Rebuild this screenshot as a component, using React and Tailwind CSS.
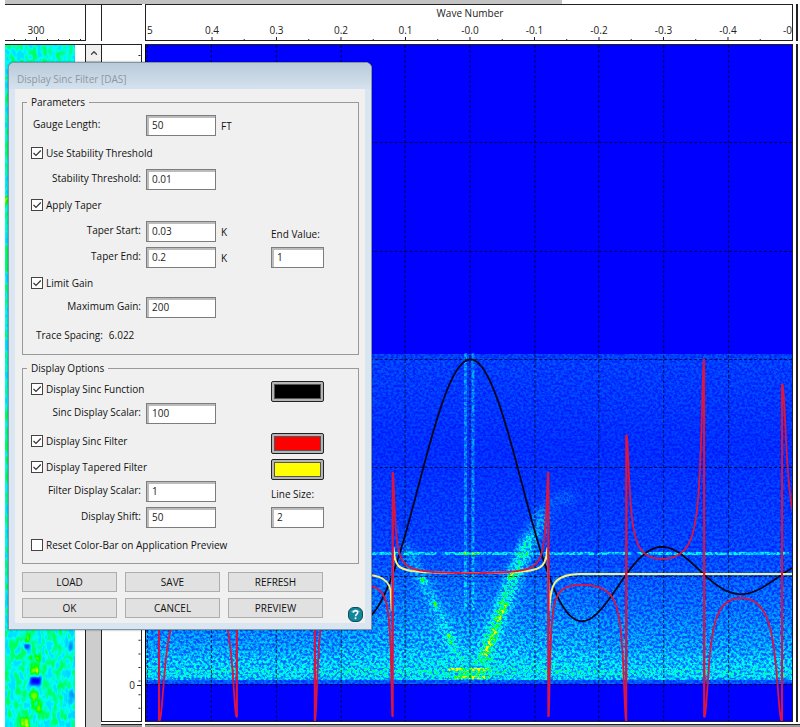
import clsx from 'clsx'
import { ChevronUp } from 'lucide-react'

const CENTER = 470
const LOBE = 78
const UNIT = 647

const POLES = [
  { x: 159, top: 384, bottom: 721 },
  { x: 237, top: 359, bottom: 717 },
  { x: 315, top: 435, bottom: 721 },
  { x: 393, top: 472, bottom: 717 },
  { x: 549, top: 472, bottom: 717 },
  { x: 627, top: 435, bottom: 721 },
  { x: 705, top: 359, bottom: 717 },
  { x: 783, top: 384, bottom: 721 },
]

const sinc = (x) => {
  const t = (Math.PI * (x - CENTER - 1)) / LOBE
  return t === 0 ? 1 : Math.sin(t) / t
}

const toPath = (points) =>
  points.map(([x, y], i) => `${i ? 'L' : 'M'}${x.toFixed(1)} ${y.toFixed(1)}`).join('')

function sincPath() {
  const points = []
  for (let x = 145; x <= 794; x += 2) points.push([x, 574.5 - 215 * sinc(x)])
  return toPath(points)
}

// 1 / sinc, eased off towards the limit of the nearest pole
function filterPath() {
  const points = []
  for (let x = 145.25; x <= 794; x += 0.5) {
    const pole = POLES.reduce((a, b) => (Math.abs(b.x - x) < Math.abs(a.x - x) ? b : a))
    const gain = 2.1 / sinc(x)
    const limit = gain > 0 ? 575.2 - pole.top : pole.bottom - 575.2
    const eased = gain / (1 + Math.abs(gain / limit) ** 2.5) ** 0.4
    points.push([x, 575.2 - eased])
  }
  return toPath(points)
}

const SINC_PATH = sincPath()
const FILTER_PATH = filterPath()
const TAPER_PATH =
  'M145 574H350C378 574 388 577 391 590L392 610L394 548C395 566 399 569 412 571C432 573 450 573 470 573C490 573 508 573 528 571C542 569 547 566 548 548L550 610C551 584 554 575 580 574H794'

// grey levels in, blue > cyan > green > yellow out
function HeatFilter({ id, frequency, seed, k1, k2 }) {
  return (
    <filter id={id} x="0" y="0" width="100%" height="100%" colorInterpolationFilters="sRGB">
      <feTurbulence type="fractalNoise" baseFrequency={frequency} numOctaves="2" seed={seed} />
      <feColorMatrix values="3.4 0 0 0 -1.2  3.4 0 0 0 -1.2  3.4 0 0 0 -1.2  0 0 0 0 1" result="noise" />
      <feComposite in="SourceGraphic" in2="noise" operator="arithmetic" k1={k1} k2={k2} k3="0" k4="0" />
      <feComponentTransfer>
        <feFuncR type="table" tableValues="0 0 0 0 1" />
        <feFuncG type="table" tableValues="0 0.5 1 1 1" />
        <feFuncB type="table" tableValues="1 1 1 0 0" />
        <feFuncA type="linear" slope="0" intercept="1" />
      </feComponentTransfer>
    </filter>
  )
}

function SpectrumPlot() {
  return (
    <svg className="block h-full w-full" viewBox="145 45 648 676" preserveAspectRatio="none">
      <defs>
        <HeatFilter id="spectrum" frequency="0.37 0.41" seed="7" k1="0.7" k2="0.45" />
        <filter id="soft" x="-50%" y="-50%" width="200%" height="200%">
          <feGaussianBlur stdDeviation="4" />
        </filter>
        <filter id="slight" x="-50%" y="-50%" width="200%" height="200%">
          <feGaussianBlur stdDeviation="1" />
        </filter>
        <linearGradient id="level" x1="0" y1="0" x2="0" y2="1">
          <stop offset="0" stopColor="#262626" />
          <stop offset="0.3" stopColor="#1b1b1b" />
          <stop offset="0.6" stopColor="#292929" />
          <stop offset="0.78" stopColor="#424242" />
          <stop offset="0.9" stopColor="#5c5c5c" />
          <stop offset="0.97" stopColor="#7e7e7e" />
          <stop offset="1" stopColor="#707070" />
        </linearGradient>
        <radialGradient id="fan" cx="0.5" cy="1" r="0.8">
          <stop offset="0" stopColor="#fff" stopOpacity="0.12" />
          <stop offset="1" stopColor="#fff" stopOpacity="0" />
        </radialGradient>
      </defs>

      <g filter="url(#spectrum)">
        <rect x="145" y="45" width="648" height="676" fill="#000" />
        <rect x="145" y="354" width="648" height="326" fill="url(#level)" />
        <rect x="145" y="680" width="648" height="4" fill="#333" />
        <rect x="340" y="500" width="260" height="180" fill="url(#fan)" />
        <g stroke="#fff" fill="none">
          <path d="M466 353V610M473.500 353V610" strokeWidth="3" strokeOpacity="0.2" />
          <path d="M145 553.500H793" strokeWidth="3" strokeOpacity="0.36" strokeDasharray="60 3 34 6 90 2" />
          <path d="M460 553.500H480" strokeWidth="3" strokeOpacity="0.6" />
          <g filter="url(#soft)">
            <path d="M480 668L506 600L546 510" strokeWidth="14" strokeOpacity="0.25" />
            <path d="M484 660L514 575L530 535" strokeWidth="9" strokeOpacity="0.5" />
            <path d="M462 664L432 598L405 545" strokeWidth="9" strokeOpacity="0.25" />
            <path d="M545 505L575 495" strokeWidth="10" strokeOpacity="0.1" />
          </g>
          <g filter="url(#slight)">
            <path d="M484 658L497 627M498 622L506 601M510 578L516 574" strokeWidth="6" strokeOpacity="0.75" />
            <path d="M433 601L438 608M448 632L453 646M421 577L426 584" strokeWidth="5" strokeOpacity="0.55" />
          </g>
          <path d="M448 669.500H492M455 677.500H490" strokeWidth="3" strokeOpacity="0.9" />
          <path d="M460 673.500H484" strokeWidth="4" strokeOpacity="0.5" />
          <path d="M145 673.500H793" strokeWidth="7" strokeOpacity="0.08" />
        </g>
      </g>

      <g stroke="#000" strokeOpacity="0.7" strokeDasharray="3 2">
        {[-4, -3, -2, -1, 0, 1, 2, 3, 4, 5].map((n) => (
          <path key={n} d={`M${Math.round(CENTER - n * 64.7) + 0.5} 45V721`} />
        ))}
        {[142, 251, 359, 467, 576, 684].map((y) => (
          <path key={y} d={`M145 ${y + 0.5}H793`} />
        ))}
      </g>

      <g fill="none" strokeLinejoin="round">
        <path d={SINC_PATH} stroke="#05051e" strokeWidth="1.8" />
        <path d={TAPER_PATH} stroke="#f6f27a" strokeWidth="2" />
        {POLES.map((p) => (
          <path key={p.x} d={`M${p.x} ${p.top}V${p.bottom}`} stroke="#c81450" strokeWidth="2" />
        ))}
        <path d={FILTER_PATH} stroke="#dc1440" strokeWidth="1.8" />
      </g>
      <path d="M145.500 45V721" stroke="#000" />
    </svg>
  )
}

function TraceImage() {
  return (
    <svg className="block h-full w-[70px]" viewBox="5 45 70 682" preserveAspectRatio="none">
      <defs>
        <HeatFilter id="trace" frequency="0.19 0.1" seed="3" k1="0.36" k2="0.76" />
        <filter id="spot" x="-50%" y="-50%" width="200%" height="200%">
          <feGaussianBlur stdDeviation="1.5" />
        </filter>
      </defs>
      <g filter="url(#trace)">
        <rect x="5" y="45" width="70" height="682" fill="#949494" />
        <rect x="66" y="45" width="9" height="682" fill="#8c8c8c" />
        <g filter="url(#spot)">
          <path d="M35 655V674M33 692L39 712M25 632V642" stroke="#c4c4c4" strokeWidth="9" />
          <path d="M30 681H41" stroke="#000" strokeWidth="8" />
          <path d="M24 646H30" stroke="#222" strokeWidth="6" />
          <path d="M35 668V674M25 718V727M5 196V204" stroke="#fff" strokeWidth="8" />
          <path d="M71 640V650M71 690V705" stroke="#444" strokeWidth="4" />
        </g>
      </g>
    </svg>
  )
}

function WaveAxis() {
  const ticks = [
    ['0.4', 4],
    ['0.3', 3],
    ['0.2', 2],
    ['0.1', 1],
    ['-0.0', 0],
    ['-0.1', -1],
    ['-0.2', -2],
    ['-0.3', -3],
    ['-0.4', -4],
  ]
  const at = (n) => `${((CENTER - 145 - (n * UNIT) / 10) / 648) * 100}%`
  return (
    <svg className="block h-full w-full text-[10px]" fill="#222">
      <text x={at(0)} y="12" textAnchor="middle">Wave Number</text>
      <text x="1" y="29">5</text>
      {ticks.map(([label, n]) => (
        <g key={label}>
          <text x={at(n)} y="29" textAnchor="middle">{label}</text>
          <line x1={at(n)} x2={at(n)} y1="32" y2="36" stroke="#222" />
          <line x1={at(n - 0.5)} x2={at(n - 0.5)} y1="34" y2="36" stroke="#222" />
        </g>
      ))}
      <text x="100%" y="29" textAnchor="end">-0</text>
    </svg>
  )
}

function TextField({ id, value, className }) {
  return (
    <input
      id={id}
      type="text"
      defaultValue={value}
      className={clsx(
        'h-[21px] w-full border border-[#7d7d7d] bg-white pl-[5px] text-[#222] shadow-[inset_1px_1px_0_1px_#bcbcbc] outline-none',
        className,
      )}
    />
  )
}

function FieldRow({ id, label, value, unit, className, left, children }) {
  return (
    <div className={clsx('grid grid-cols-[110px_70px_45px_53px] items-center gap-x-[5px]', className)}>
      <label htmlFor={id} className={clsx('pb-0.5 whitespace-nowrap', left ? 'pl-0.5' : 'text-right')}>
        {label}
      </label>
      <TextField id={id} value={value} />
      <span className="pt-0.5">{unit}</span>
      {children}
    </div>
  )
}

function CheckRow({ label, checked = true, className, children }) {
  return (
    <div className={clsx('grid grid-cols-[235px_53px] items-center gap-x-[5px]', className)}>
      <label className="flex items-center gap-[3px] whitespace-nowrap">
        <span className="grid size-3 shrink-0">
          <input
            type="checkbox"
            defaultChecked={checked}
            className="peer col-start-1 row-start-1 size-3 appearance-none border border-[#444] bg-white"
          />
          <svg
            viewBox="0 0 12 12"
            className="pointer-events-none invisible col-start-1 row-start-1 size-3 peer-checked:visible"
            fill="none"
            stroke="#333"
            strokeWidth="1.2"
          >
            <path d="M2.500 6L5 8.500L9.800 3.500" />
          </svg>
        </span>
        {label}
      </label>
      {children}
    </div>
  )
}

function Swatch({ label, className }) {
  return (
    <button
      type="button"
      aria-label={label}
      className="mt-1 h-[21px] w-[53px] rounded-[2px] border border-[#222] bg-[#b5b5b5] p-[2px]"
    >
      <span className={clsx('block h-full border border-[#555]', className)} />
    </button>
  )
}

function Group({ title, className, children }) {
  return (
    <fieldset className={clsx('border border-[#999] pl-2', className)}>
      <legend className="-ml-1 h-3 px-1 leading-3">{title}</legend>
      {children}
    </fieldset>
  )
}

function SincFilterDialog() {
  return (
    <section
      role="dialog"
      aria-label="Display Sinc Filter [DAS]"
      className="absolute top-[62px] left-2 w-[364px] rounded-t-md border border-[#7f96a8] bg-[#d9e6f2] px-[6px] pb-[6px] shadow-[0_0_2px_#0008]"
    >
      <h1 className="-mx-[6px] flex h-[26px] items-center rounded-t-md bg-linear-to-b from-[#b9cad9] to-[#d5e2ee] px-2 pt-1.5 text-[#8b98a3]">
        Display Sinc Filter [DAS]
      </h1>
      <div className="bg-[#f0f0f0] pt-[7px] pr-[6px] pb-[5px] pl-[7px]">
        <Group title="Parameters" className="h-[259px]">
          <div className="pt-1">
            <FieldRow id="gauge" label="Gauge Length:" value="50" unit="FT" left className="h-[26px]" />
            <CheckRow label="Use Stability Threshold" className="h-[30px]" />
            <FieldRow id="stability" label="Stability Threshold:" value="0.01" className="h-[22px]" />
            <CheckRow label="Apply Taper" className="h-[30px]" />
            <FieldRow id="taper-start" label="Taper Start:" value="0.03" unit="K" className="h-[22px]">
              <label htmlFor="end-value" className="pt-1.5 whitespace-nowrap">End Value:</label>
            </FieldRow>
            <FieldRow id="taper-end" label="Taper End:" value="0.2" unit="K" className="h-[30px]">
              <TextField id="end-value" value="1" />
            </FieldRow>
            <CheckRow label="Limit Gain" className="h-[22px]" />
            <FieldRow id="max-gain" label="Maximum Gain:" value="200" className="h-[26px]" />
            <p className="flex h-[30px] items-center gap-1.5 pl-[5px]">
              <span>Trace Spacing:</span>
              <span>6.022</span>
            </p>
          </div>
        </Group>

        <Group title="Display Options" className="mt-[7px] h-[202px]">
          <div className="pt-0.5">
            <CheckRow label="Display Sinc Function" className="h-[26px]">
              <Swatch label="Sinc function color" className="bg-black" />
            </CheckRow>
            <FieldRow id="sinc-scalar" label="Sinc Display Scalar:" value="100" className="h-[22px]" />
            <CheckRow label="Display Sinc Filter" className="mt-1 h-[26px]">
              <Swatch label="Sinc filter color" className="bg-[#ff0000]" />
            </CheckRow>
            <CheckRow label="Display Tapered Filter" className="h-[26px]">
              <Swatch label="Tapered filter color" className="bg-[#ffff00]" />
            </CheckRow>
            <FieldRow id="filter-scalar" label="Filter Display Scalar:" value="1" className="h-[22px]">
              <label htmlFor="line-size" className="pt-1.5 whitespace-nowrap">Line Size:</label>
            </FieldRow>
            <FieldRow id="shift" label="Display Shift:" value="50" className="h-[30px]">
              <TextField id="line-size" value="2" />
            </FieldRow>
            <CheckRow label="Reset Color-Bar on Application Preview" checked={false} className="h-[26px]" />
          </div>
        </Group>

        <div className="mt-2 flex items-end justify-between">
          <div className="grid grid-cols-[95px_95px_95px] gap-x-2 gap-y-1.5">
            {['LOAD', 'SAVE', 'REFRESH', 'OK', 'CANCEL', 'PREVIEW'].map((name) => (
              <button key={name} type="button" className="h-5 border border-[#adadad] bg-[#e1e1e1] leading-[18px]">
                {name}
              </button>
            ))}
          </div>
          <button type="button" aria-label="Help" className="-mr-1 -mb-1">
            <svg className="block size-[15px]" viewBox="0 0 15 15">
              <rect x="0.500" y="0.500" width="14" height="14" rx="5.500" fill="#12869a" stroke="#0b4a58" />
              <path d="M2.500 5Q7.500 0 12.500 5Z" fill="#5cc0cc" />
              <path d="M5.300 5.800C5.300 3 9.700 3 9.700 5.600C9.700 7.400 7.500 7.300 7.500 9.200" fill="none" stroke="#fff" strokeWidth="1.600" />
              <circle cx="7.500" cy="11.300" r="1" fill="#fff" />
            </svg>
          </button>
        </div>
      </div>
    </section>
  )
}

export default function App() {
  return (
    <main className="relative flex h-screen min-h-[640px] flex-col overflow-hidden bg-white pl-[5px] font-['Open_Sans','Noto_Sans',sans-serif] text-[10px] leading-[14px] text-[#111]">
      <div className="h-1 w-[70%] shrink-0 bg-[#c3c3c3]" />

      <div className="flex h-[37px] shrink-0">
        <div className="w-[81px] border-y border-r border-[#222]">
          <svg className="block h-full w-full text-[10px]" fill="#222">
            <text x="31" y="29" textAnchor="middle">300</text>
            <path d="M31.500 32V36" stroke="#222" />
            <path d="M9.500 34V36M20.500 34V36M42.500 34V36M53.500 34V36M64.500 34V36M75.500 34V36" stroke="#222" />
          </svg>
        </div>
        <div className="w-[15px] border-t border-[#222]" />
        <div className="w-[41px] border-t border-l border-[#222]" />
        <div className="ml-[3px] flex-1 border border-[#222]">
          <WaveAxis />
        </div>
        <div className="ml-[3px] w-1 border-l-2 border-[#222]" />
      </div>

      <div className="mt-[3px] flex min-h-0 flex-1">
        <div className="w-[81px] border-t border-r border-[#222]">
          <TraceImage />
        </div>
        <div className="flex w-[15px] flex-col border-t border-[#222] bg-[#cdcdcd]">
          <div className="grid h-4 place-items-center bg-[#f0f0f0]">
            <ChevronUp size={10} strokeWidth={3} color="#444" />
          </div>
        </div>
        <div className="flex min-w-0 flex-1 flex-col">
          <div className="flex min-h-0 flex-1">
            <div className="w-[41px] border border-[#222]">
              <svg className="block h-full w-full text-[10px]" viewBox="102 45 39 676" preserveAspectRatio="none" fill="#222">
                <path d="M137 685.500H142" stroke="#222" />
                <path d="M139.500 55V721" stroke="#222" strokeWidth="2" strokeDasharray="1 12.600" />
                <text x="135" y="689" textAnchor="end">0</text>
              </svg>
            </div>
            <div className="ml-[3px] min-w-0 flex-1 border-t border-r border-b border-[#222]">
              <SpectrumPlot />
            </div>
            <div className="ml-[3px] w-1 border-l-2 border-[#222]" />
          </div>
          <div className="mt-[2px] flex h-[3px] shrink-0 gap-[3px]">
            <div className="w-[41px] border-t border-[#222] bg-[#999]" />
            <div className="flex-1 border-t border-[#222] bg-[#999]" />
          </div>
        </div>
      </div>

      <SincFilterDialog />
    </main>
  )
}
